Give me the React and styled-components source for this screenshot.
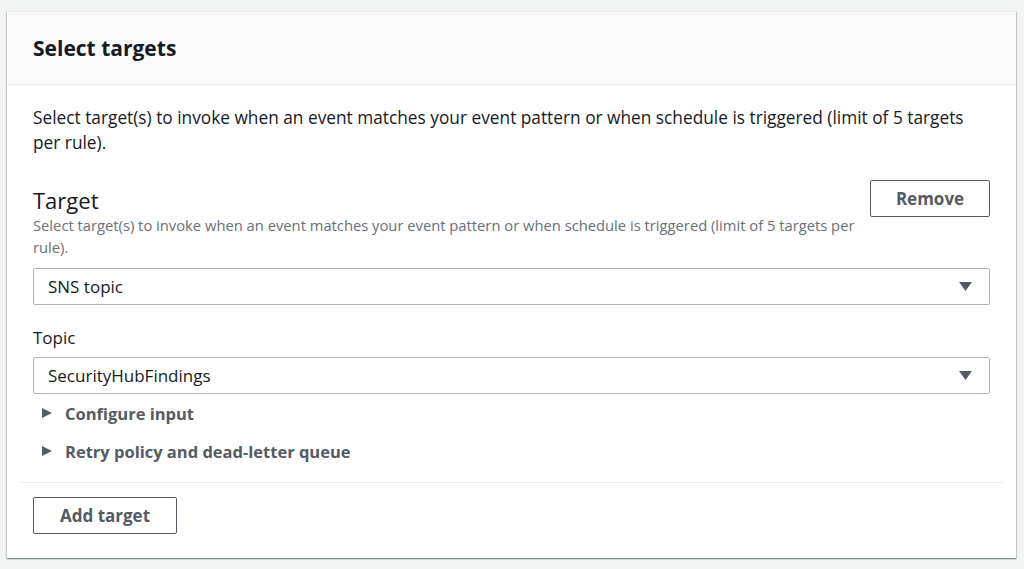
import React from "react";
import styled, { createGlobalStyle } from "styled-components";

const GlobalStyle = createGlobalStyle`
  html, body {
    margin: 0;
    padding: 0;
    background: #f2f3f3;
    font-family: "Open Sans", "Noto Sans", Arial, sans-serif;
    color: #16191f;
  }
  * {
    box-sizing: border-box;
  }
`;

const DESC =
  "Select target(s) to invoke when an event matches your event pattern or when schedule is triggered (limit of 5 targets per rule).";

const Caret = () => (
  <svg width="10" height="10" viewBox="0 0 10 10">
    <polygon points="0,0 10,5 0,10" fill="#545b64" />
  </svg>
);

const DownArrow = () => (
  <svg width="13" height="9" viewBox="0 0 13 9">
    <polygon points="0,0 13,0 6.5,9" fill="#545b64" />
  </svg>
);

const Dropdown = ({ value }) => (
  <SelectBox>
    <span>{value}</span>
    <DownArrow />
  </SelectBox>
);

const Expander = ({ label }) => (
  <ExpandRow>
    <Caret />
    <span>{label}</span>
  </ExpandRow>
);

const App = () => {
  return (
    <Page>
      <GlobalStyle />
      <Card>
        <Header>
          <Title>Select targets</Title>
        </Header>
        <Body>
          <Intro>{DESC}</Intro>
          <TargetRow>
            <TargetInfo>
              <TargetLabel>Target</TargetLabel>
              <Hint>{DESC}</Hint>
            </TargetInfo>
            <Button $width={120}>Remove</Button>
          </TargetRow>
          <Dropdown value="SNS topic" />
          <FieldLabel>Topic</FieldLabel>
          <Dropdown value="SecurityHubFindings" />
          <Expanders>
            <Expander label="Configure input" />
            <Expander label="Retry policy and dead-letter queue" />
          </Expanders>
        </Body>
        <Footer>
          <Button $width={144}>Add target</Button>
        </Footer>
      </Card>
    </Page>
  );
};

export default App;

const Page = styled.div`
  padding: 11px 8px 11px 7px;
`;

const Card = styled.div`
  background: #ffffff;
  box-shadow: 0 1px 1px 0 rgba(0, 28, 36, 0.3), 1px 1px 1px 0 rgba(0, 28, 36, 0.15),
    -1px 1px 1px 0 rgba(0, 28, 36, 0.15);
  border-top: 1px solid #eaeded;
`;

const Header = styled.div`
  height: 73px;
  display: flex;
  align-items: center;
  padding: 0 26px;
  background: #fafafa;
  border-bottom: 1px solid #eaeded;
`;

const Title = styled.h2`
  margin: 0;
  font-size: 21px;
  font-weight: 700;
  color: #16191f;
`;

const Body = styled.div`
  display: flex;
  flex-direction: column;
  padding: 20px 26px 12px;
`;

const Intro = styled.p`
  margin: 0;
  font-size: 17.3px;
  line-height: 25px;
`;

const TargetRow = styled.div`
  display: flex;
  align-items: flex-start;
  gap: 12px;
  margin-top: 25px;
`;

const TargetInfo = styled.div`
  flex: 1;
  padding-top: 6px;
`;

const TargetLabel = styled.div`
  font-size: 22px;
  line-height: 28px;
`;

const Hint = styled.div`
  font-size: 14.75px;
  line-height: 22px;
  color: #687078;
`;

const Button = styled.button`
  flex: none;
  height: 37px;
  width: ${(p) => p.$width}px;
  padding: 0;
  background: #ffffff;
  border: 1px solid #545b64;
  border-radius: 2px;
  font-family: inherit;
  font-size: 17px;
  font-weight: 700;
  color: #545b64;
`;

const SelectBox = styled.div`
  display: flex;
  align-items: center;
  justify-content: space-between;
  height: 37px;
  margin-top: 10px;
  padding: 0 17px 0 14px;
  border: 1px solid #aab7b8;
  border-radius: 2px;
  font-size: 17px;
  color: #16191f;
`;

const FieldLabel = styled.div`
  margin-top: 21px;
  font-size: 17px;
  line-height: 24px;
  margin-bottom: -3px;
`;

const Expanders = styled.div`
  display: flex;
  flex-direction: column;
`;

const ExpandRow = styled.div`
  display: flex;
  align-items: center;
  gap: 13px;
  height: 38px;
  padding-left: 9px;
  font-size: 16.5px;
  font-weight: 700;
  color: #545b64;
`;

const Footer = styled.div`
  margin: 0 13px;
  padding: 14px 13px 24px;
  border-top: 1px solid #eaeded;
`;
